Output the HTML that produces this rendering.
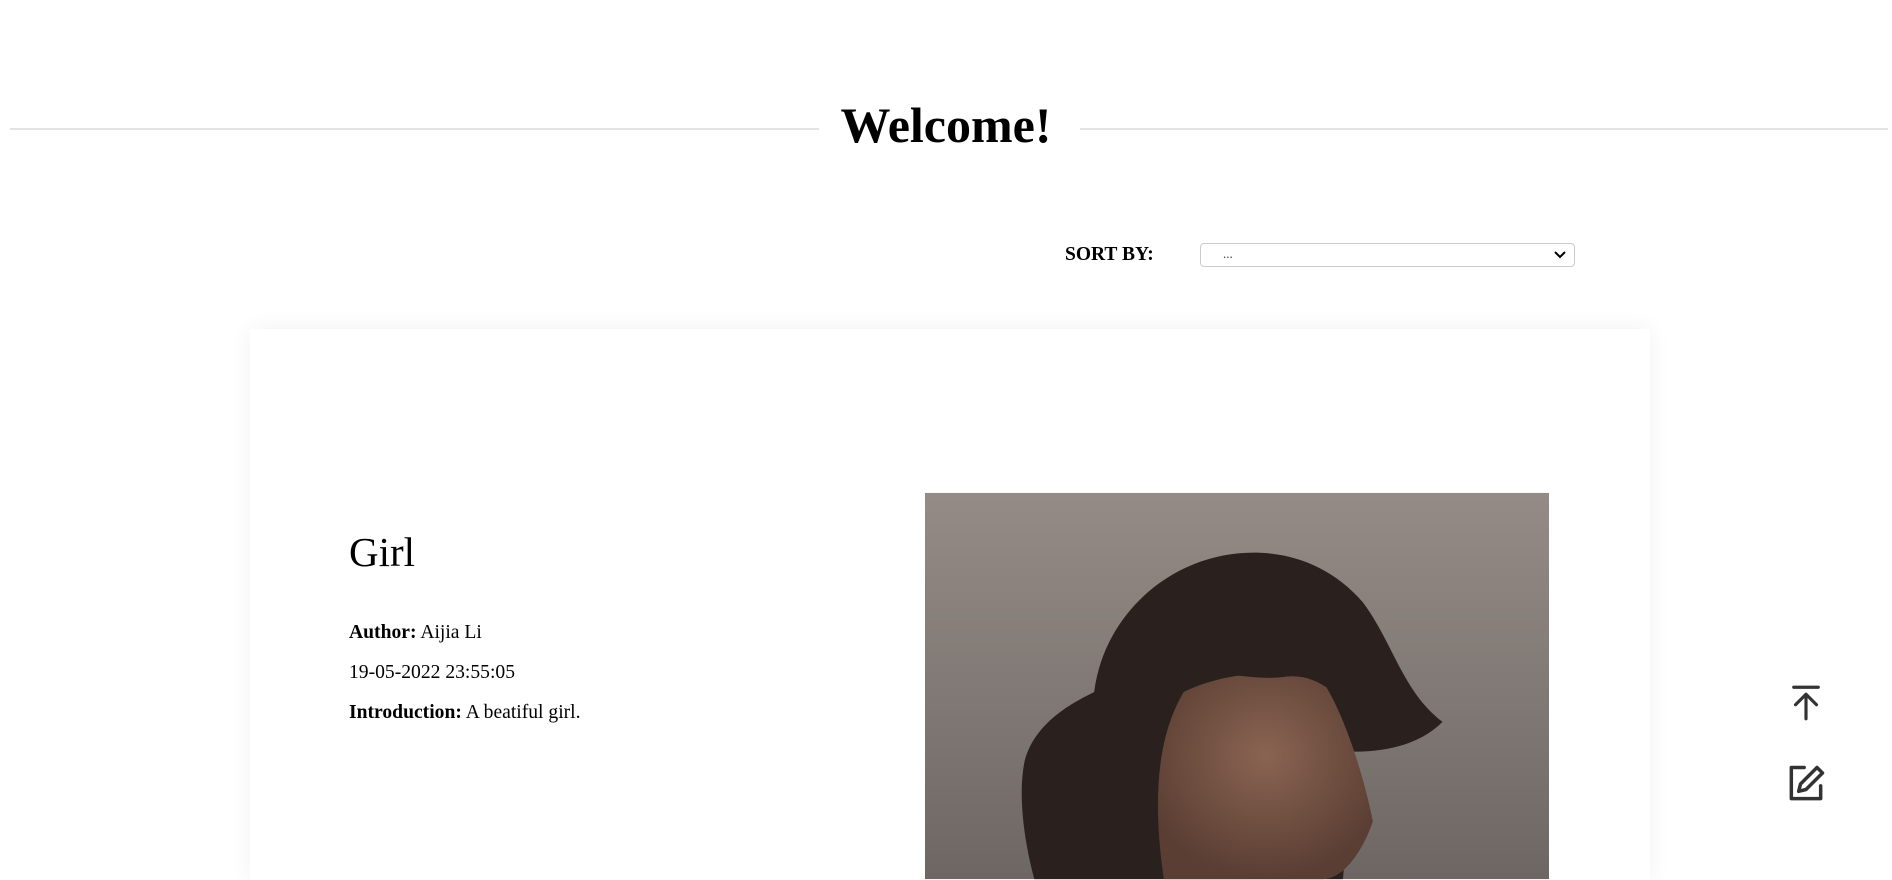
<!DOCTYPE html>
<html><head><meta charset="utf-8"><style>
html,body{margin:0;padding:0;background:#fff;width:1892px;height:880px;overflow:hidden;font-family:"Liberation Serif",serif;color:#000}
body{position:relative}
.line{position:absolute;top:128px;height:2px;background:#e3e3e3}
h1{position:absolute;top:97px;left:0;width:1892px;text-align:center;margin:0;font-size:50px;line-height:56px;font-weight:bold}
.sort{position:absolute;left:1065px;top:244px;font-size:19.5px;font-weight:bold}
.sel{position:absolute;left:1200px;top:243px;width:373px;height:22px;border:1px solid #ccc;border-radius:4px;font-size:13px;color:#333}
.card{position:absolute;left:250px;top:329px;width:1400px;height:551px;background:#fff;box-shadow:0 0 22px rgba(0,0,0,.06)}
.t{position:absolute;left:349px;font-size:19.6px}
</style></head><body>
<div class="line" style="left:10px;width:809px"></div>
<div class="line" style="left:1080px;width:808px"></div>
<h1>Welcome!</h1>
<div class="sort">SORT BY:</div>
<div class="sel"><span style="position:absolute;left:22px;top:2px">...</span>
<svg style="position:absolute;right:8px;top:6px" width="12" height="10" viewBox="0 0 12 10"><path d="M1 2l5 5 5-5" fill="none" stroke="#000" stroke-width="2"/></svg></div>
<div class="card"></div>
<div style="position:absolute;left:349px;top:527px;font-size:41px;line-height:50px">Girl</div>
<div class="t" style="top:622px"><b>Author:</b> Aijia Li</div>
<div class="t" style="top:662px">19-05-2022 23:55:05</div>
<div class="t" style="top:702px"><b>Introduction:</b> A beatiful girl.</div>
<svg style="position:absolute;left:925px;top:492px" width="624" height="388" viewBox="0 0 627 388">
<defs><linearGradient id="bg" x1="0" y1="0" x2="0" y2="1"><stop offset="0" stop-color="#958b86"/><stop offset=".6" stop-color="#7d7672"/><stop offset="1" stop-color="#6d6663"/></linearGradient>
<radialGradient id="sk" cx=".5" cy=".4" r=".6"><stop offset="0" stop-color="#8a6452"/><stop offset="1" stop-color="#5a3e33"/></radialGradient></defs>
<rect width="627" height="388" fill="url(#bg)"/>
<path d="M330 60 C250 60 180 120 170 200 C150 210 110 230 100 270 C90 320 110 388 110 388 L420 388 L430 260 C470 260 500 250 520 230 C480 200 470 150 440 110 C410 75 370 60 330 60Z" fill="#2a201d"/>
<path d="M260 200 C300 180 360 175 400 190 C420 220 440 280 450 330 C440 360 420 388 400 388 L240 388 C230 320 230 250 260 200Z" fill="url(#sk)"/>
<path d="M240 190 C280 170 320 190 360 185 C390 180 420 200 440 240 L470 250 C450 200 420 150 380 130 C320 120 270 150 240 190Z" fill="#2a201d"/>
</svg>
<svg style="position:absolute;left:1785px;top:682px" width="42" height="42" viewBox="0 0 24 24" fill="none" stroke="#333" stroke-width="1.8" stroke-linecap="round" stroke-linejoin="round"><path d="M5 3h14M12 21V7M6 13l6-6 6 6"/></svg>
<svg style="position:absolute;left:1784px;top:762px" width="44" height="44" viewBox="0 0 24 24" fill="none" stroke="#333" stroke-width="1.9" stroke-linecap="round" stroke-linejoin="round"><path d="M11 3H4v17h16v-7"/><path d="M18 3l3 3-9 9-4 1 1-4z"/></svg>
</body></html>
